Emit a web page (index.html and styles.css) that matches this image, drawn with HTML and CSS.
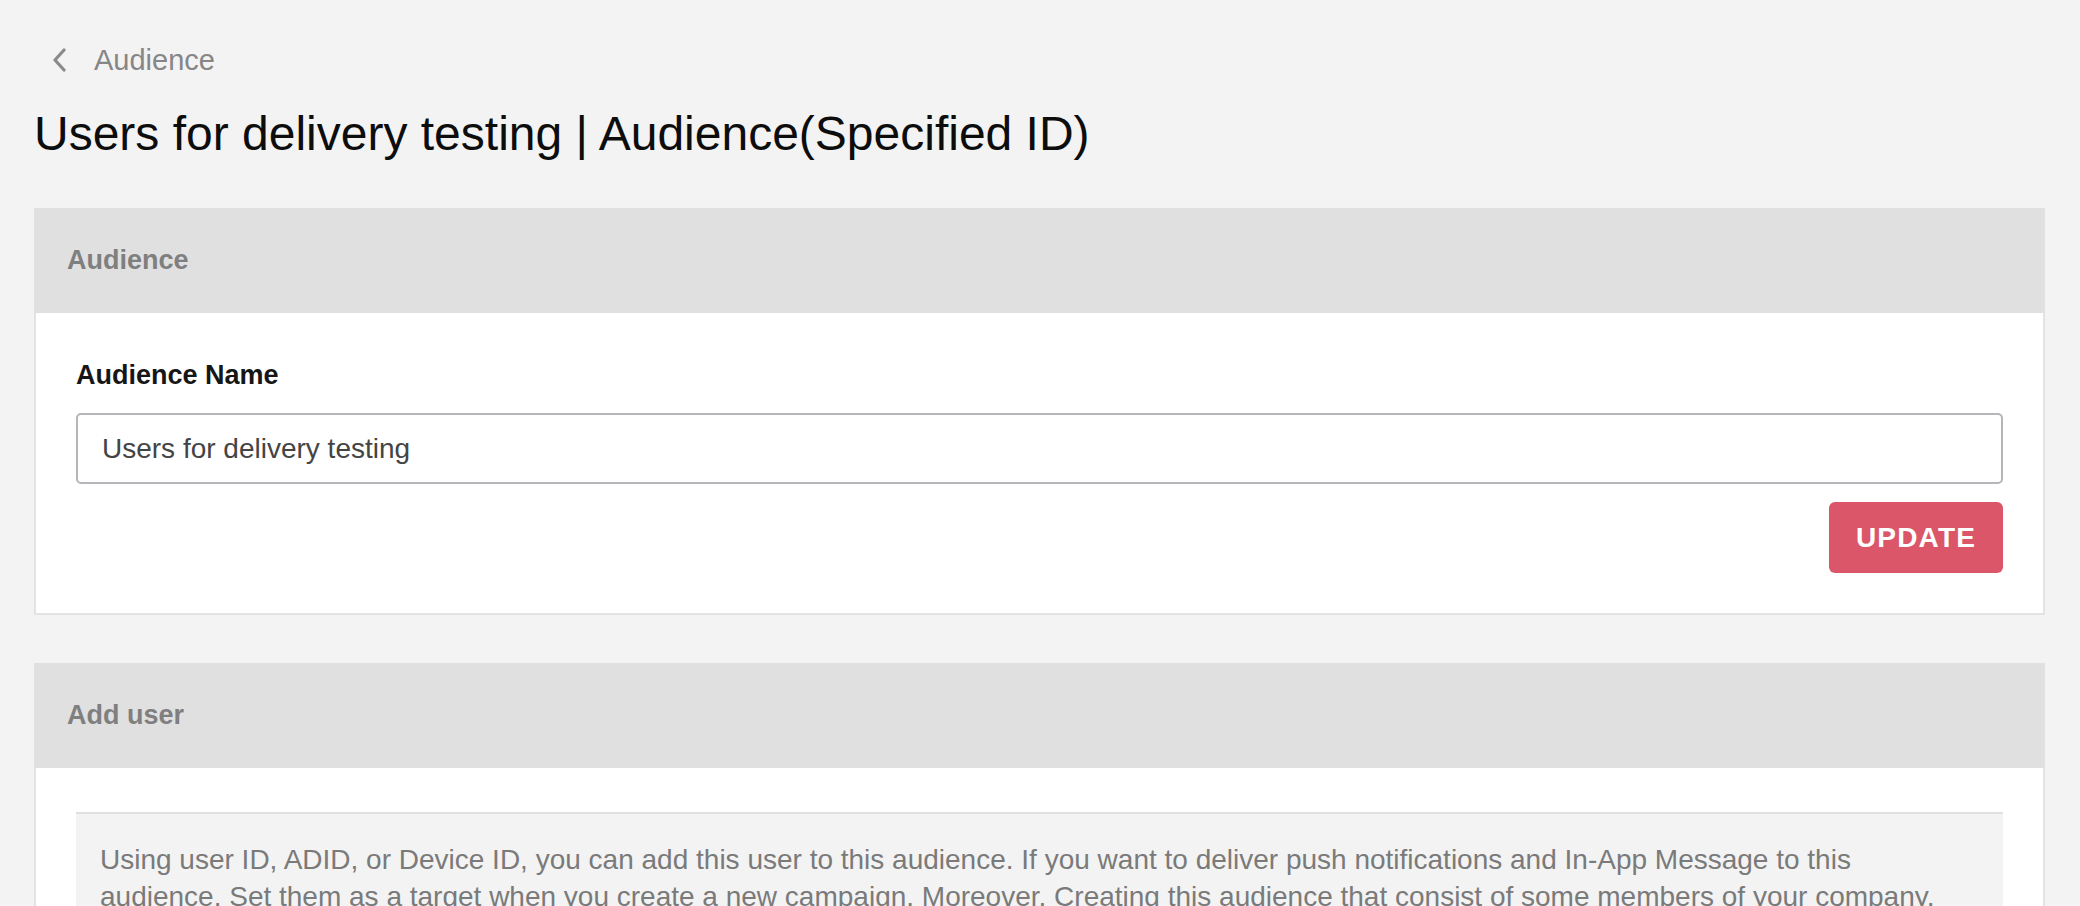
FILE: index.html
```html
<!DOCTYPE html>
<html lang="en">
<head>
<meta charset="utf-8">
<title>Users for delivery testing | Audience(Specified ID)</title>
<link rel="stylesheet" href="styles.css">
</head>
<body>
<main class="page">
  <nav class="breadcrumb">
    <svg class="chevron" width="16" height="24" viewBox="0 0 16 24" aria-hidden="true">
      <path d="M12 2 L3 12 L12 22" fill="none" stroke="#8a8a8a" stroke-width="3.2" stroke-linecap="round" stroke-linejoin="round"/>
    </svg>
    <span class="crumb">Audience</span>
  </nav>
  <h1 class="title">Users for delivery testing | Audience(Specified ID)</h1>

  <section class="card">
    <header class="card-head">Audience</header>
    <div class="card-body">
      <label class="field-label" for="name">Audience Name</label>
      <input class="text-input" id="name" type="text" value="Users for delivery testing">
      <div class="actions">
        <button class="btn-primary" type="button">UPDATE</button>
      </div>
    </div>
  </section>

  <section class="card">
    <header class="card-head">Add user</header>
    <div class="card-body">
      <div class="info-box">
        <p class="info-text">Using user ID, ADID, or Device ID, you can add this user to this audience. If you want to deliver push notifications and In-App Message to this audience. Set them as a target when you create a new campaign. Moreover, Creating this audience that consist of some members of your company, you can test the delivery before sending it to all users.</p>
      </div>
    </div>
  </section>
</main>
</body>
</html>
```

FILE: styles.css
```css
* { box-sizing: border-box; }

html, body {
  margin: 0;
  padding: 0;
  background: #f3f3f3;
}

body {
  font-family: "Liberation Sans", Arial, Helvetica, sans-serif;
  color: #111;
}

.page {
  padding: 40px 35px 40px 34px;
}

.breadcrumb {
  display: flex;
  align-items: center;
  gap: 26px;
  height: 40px;
  padding-left: 18px;
}

.chevron {
  display: block;
  flex: none;
}

.crumb {
  font-size: 29px;
  line-height: 40px;
  color: #868686;
}

.title {
  margin: 26px 0 46px;
  font-size: 48px;
  line-height: 56px;
  font-weight: 400;
  color: #0d0d0d;
}

.card {
  background: #fff;
  border: 2px solid #e3e3e3;
  border-top: none;
  margin-bottom: 48px;
}

.card-head {
  display: flex;
  align-items: center;
  height: 105px;
  margin: 0 -2px;
  padding-left: 33px;
  background: #e0e0e0;
  color: #7f7f7f;
  font-size: 27px;
  font-weight: 700;
}

.card-body {
  padding: 44px 40px 40px;
}

.field-label {
  display: block;
  font-size: 27px;
  line-height: 36px;
  font-weight: 700;
  color: #161616;
}

.text-input {
  display: block;
  width: 100%;
  height: 71px;
  margin-top: 20px;
  padding: 0 24px;
  border: 2px solid #b6b6ba;
  border-radius: 5px;
  background: #fff;
  font-family: inherit;
  font-size: 28px;
  color: #444;
  outline: none;
}

.actions {
  display: flex;
  justify-content: flex-end;
  margin-top: 18px;
}

.btn-primary {
  width: 174px;
  height: 71px;
  border: none;
  border-radius: 6px;
  background: #db5669;
  color: #fff;
  font-family: inherit;
  font-size: 28px;
  font-weight: 700;
  letter-spacing: 1.2px;
  cursor: pointer;
}

.info-box {
  background: #f3f3f3;
  border-top: 2px solid #e0e0e0;
  padding: 27px 24px 30px;
}

.info-text {
  margin: 0;
  font-size: 28px;
  line-height: 37px;
  color: #7a7a7a;
}
```
